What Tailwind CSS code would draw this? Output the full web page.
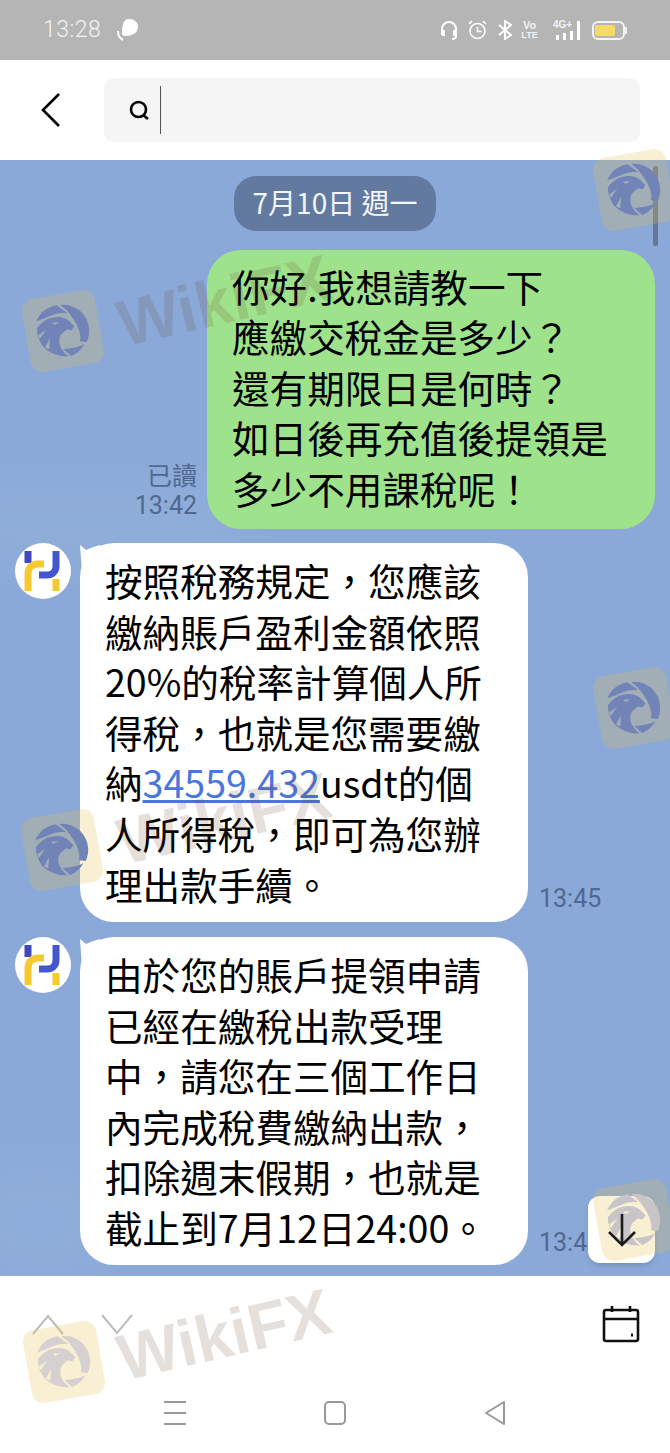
<!DOCTYPE html>
<html lang="zh-Hant">
<head>
  <meta charset="UTF-8" />
  <meta name="viewport" content="width=device-width, initial-scale=1.0" />
  <title>Chat</title>
  <script src="https://cdn.jsdelivr.net/npm/@tailwindcss/browser@4"></script>
</head>
<body class="font-['Noto_Sans_CJK_TC','Noto_Sans',sans-serif] bg-white">
  <svg class="hidden">
    <symbol id="eagle" viewBox="0 0 60 60">
      <path fill="currentColor" d="M3.5 15A28 28 0 0 1 28 1.5L38 12Q28 9 18 12Z"/>
      <path fill="currentColor" d="M32 2A28 28 0 0 1 53 46L46 44Q51 32 38 9Z"/>
      <path fill="currentColor" d="M50 48A28 28 0 0 1 34 58L27 49Q40 51 50 48Z"/>
      <path fill="currentColor" fill-rule="evenodd" d="M3 22Q12 14 20 14Q32 13 38 20L43 27L39 31L35 29Q27 32 25 37Q21 46 31 58Q14 55 6 43Q1 32 3 22ZM20 19l8 1-6 2zM3 30l10-5-9 9zM8 44l7-9-3 12z"/>
    </symbol>
    <symbol id="avatar" viewBox="0 0 56 56">
      <g fill="none" stroke-width="7">
        <path stroke="#3f48c0" d="M13 8v12"/>
        <path stroke="#f6c92f" d="M13 48V31c0-7 5-10 10-10h6"/>
        <path stroke="#4356cf" d="M41 8v15c0 6-4 9-9 9h-8"/>
        <path stroke="#f6c92f" d="M41 36v12"/>
      </g>
    </symbol>
    <symbol id="tail" viewBox="0 0 20 30">
      <path fill="#fff" d="M0 2L6 7Q12 4 20 2V30H2Z"/>
    </symbol>
  </svg>

  <div class="relative w-[670px] h-[1453px] overflow-hidden flex flex-col">
    <!-- Status bar -->
    <div class="h-[60px] bg-[#b5b5b5] flex items-center justify-between pl-[43px] pr-[43px] text-[#f2f2f2]">
      <div class="flex items-center gap-[14px]">
        <span class="font-['Roboto'] font-light text-[23px] tracking-[0.5px]">13:28</span>
        <svg class="w-[24px] h-[24px]" viewBox="0 0 24 24"><path fill="#fff" d="M14 1c5 0 9 3 9 8 0 6-6 9-13 9-2 0-3-1-3-3 0-7 1-14 7-14z"/><path fill="none" stroke="#fff" stroke-width="2" d="M3 13c0 4 1 7 5 9"/></svg>
      </div>
      <div class="flex items-center">
        <svg class="w-[18px] h-[20px]" viewBox="0 0 18 20" fill="none" stroke="#fff" stroke-width="2"><path d="M2 15V9a7 7 0 0 1 14 0v7c0 2-1 3-4 3"/><path d="M2 11h2v4H2M16 11h-2v4h2"/></svg>
        <svg class="w-[19px] h-[20px] ml-[10px]" viewBox="0 0 19 20" fill="none" stroke="#fff" stroke-width="1.6"><circle cx="9.5" cy="11" r="7.5"/><path d="M9.5 7v4.5h4M1 4l3-3M18 4l-3-3"/></svg>
        <svg class="w-[14px] h-[20px] ml-[11px]" viewBox="0 0 14 20" fill="none" stroke="#fff" stroke-width="2"><path d="M1 5l12 10-6 4V1l6 4L1 15"/></svg>
        <div class="flex flex-col items-center text-[11px] leading-[9px] font-bold font-['Liberation_Sans'] w-[15px] ml-[10px]"><span>Vo</span><span class="text-[9px] mt-[1px]">LTE</span></div>
        <div class="relative w-[27px] h-[20px] ml-[16px]">
          <span class="absolute left-0 top-0 text-[10px] leading-[10px] font-['Liberation_Sans'] font-bold">4G+</span>
          <div class="absolute left-[3px] bottom-0 flex items-end gap-[4px]">
            <div class="w-[3px] h-[5px] bg-white"></div>
            <div class="w-[3px] h-[7px] bg-white"></div>
            <div class="w-[3px] h-[9px] bg-white"></div>
            <div class="w-[3px] h-[19px] bg-white"></div>
          </div>
        </div>
        <div class="flex items-center ml-[12px]">
          <div class="w-[33px] h-[19px] rounded-[6px] border-[2.5px] border-[#f4f4f4] flex items-center pl-[1px]">
            <div class="w-[20px] h-[11px] rounded-[2px] bg-[#f7d965]"></div>
          </div>
          <div class="w-[2px] h-[7px] bg-[#eee]"></div>
        </div>
      </div>
    </div>

    <!-- Search header -->
    <div class="h-[100px] bg-white flex items-center pl-[41px] pr-[30px]">
      <svg class="w-[20px] h-[36px] mr-[43px]" viewBox="0 0 20 36" fill="none" stroke="#000" stroke-width="2.6"><path d="M18 2L2 18l16 16"/></svg>
      <div class="flex-1 h-[64px] rounded-[10px] bg-[#f5f5f5] flex items-center pl-[25px] gap-[10px]">
        <svg class="w-[21px] h-[21px]" viewBox="0 0 21 21" fill="none" stroke="#000" stroke-width="2.6"><circle cx="9.5" cy="9.5" r="7.5"/><path d="M14 15l5 4"/></svg>
        <div class="w-[1px] h-[48px] bg-[#555]"></div>
      </div>
    </div>

    <!-- Chat -->
    <div class="relative h-[1116px] bg-[#8aa9d8] flex flex-col overflow-hidden pt-[16px]">
      <div class="absolute left-[-40px] top-[320px] w-[300px] h-[90px] rounded-full bg-white/5 blur-xl"></div>
      <div class="absolute left-[-40px] top-[1000px] w-[160px] h-[120px] rounded-full bg-white/5 blur-xl"></div>

      <div class="relative self-center w-[202px] h-[55px] rounded-[22px] bg-[#627a9f] text-[#f4f6fa] text-[28px] pb-[3px] flex items-center justify-center">7月10日 週一</div>

      <div class="relative flex justify-end items-end mt-[19px] pr-[15px]">
        <div class="flex flex-col items-end mr-[10px] mb-[7px] text-[#4f6890] text-[25px] leading-[32px]">
          <span>已讀</span>
          <span class="font-['Roboto']">13:42</span>
        </div>
        <div class="w-[448px] h-[279px] rounded-[34px] bg-[#9fe28c] text-black text-[37.6px] leading-[50.4px] pl-[25px] pt-[11px]">
          你好.我想請教一下<br>應繳交稅金是多少？<br>還有期限日是何時？<br>如日後再充值後提領是<br>多少不用課稅呢！
        </div>
      </div>

      <div class="relative flex items-end mt-[14px] pl-[15px]">
        <svg class="self-start w-[56px] h-[56px] rounded-full bg-white shrink-0"><use href="#avatar" /></svg>
        <div class="relative ml-[9px] w-[448px] h-[379px] rounded-[34px] bg-white text-black text-[37.6px] leading-[50.6px] pl-[25px] pt-[12px]">
          <svg class="absolute left-0 top-0 w-[20px] h-[30px]"><use href="#tail" /></svg>
          <div class="relative">按照稅務規定，您應該<br>繳納賬戶盈利金額依照<br>20%的稅率計算個人所<br>得稅，也就是您需要繳<br>納<a class="text-[#4a76dd] underline">34559.432</a>usdt的個<br>人所得稅，即可為您辦<br>理出款手續。</div>
        </div>
        <span class="ml-[11px] mb-[7px] text-[#4f6890] text-[25px] leading-[32px] font-['Roboto']">13:45</span>
      </div>

      <div class="relative flex items-end mt-[15px] pl-[15px]">
        <svg class="self-start w-[56px] h-[56px] rounded-full bg-white shrink-0"><use href="#avatar" /></svg>
        <div class="relative ml-[9px] w-[448px] h-[328px] rounded-[34px] bg-white text-black text-[37.6px] leading-[50.6px] pl-[25px] pt-[12px]">
          <svg class="absolute left-0 top-0 w-[20px] h-[30px]"><use href="#tail" /></svg>
          <div class="relative">由於您的賬戶提領申請<br>已經在繳稅出款受理<br>中，請您在三個工作日<br>內完成稅費繳納出款，<br>扣除週末假期，也就是<br>截止到7月12日24:00。</div>
        </div>
        <span class="ml-[11px] mb-[6px] text-[#4f6890] text-[25px] leading-[32px] font-['Roboto']">13:45</span>
      </div>

      <!-- scroll thumb and jump button lie over the messages -->
      <div class="absolute right-[12px] top-[6px] w-[5px] h-[80px] rounded-full bg-[#5c6a85]/80"></div>
      <div class="absolute left-[588px] top-[1036px] w-[67px] h-[67px] rounded-[12px] bg-white shadow-md"></div>
    </div>

    <!-- Footer -->
    <div class="flex-1 bg-white relative">
      <svg class="absolute left-[31px] top-[37px] w-[34px] h-[22px]" viewBox="0 0 34 22" fill="none" stroke="#bdbdbd" stroke-width="2"><path d="M2 21L17 3l15 18"/></svg>
      <svg class="absolute left-[100px] top-[37px] w-[34px] h-[22px]" viewBox="0 0 34 22" fill="none" stroke="#bdbdbd" stroke-width="2"><path d="M2 2l15 18L32 2"/></svg>
      <svg class="absolute left-[602px] top-[29px] w-[38px] h-[38px]" viewBox="0 0 38 38" fill="none" stroke="#111" stroke-width="2.6"><rect x="2" y="5" width="34" height="31" rx="2"/><path d="M2 14h34M10 1v6M28 1v6"/><path d="M29 30h2" stroke-width="3"/></svg>
      <div class="absolute left-0 right-0 top-[124px] flex justify-center gap-[136px]">
        <svg class="w-[24px] h-[26px]" viewBox="0 0 24 26" stroke="#999" stroke-width="2"><path d="M1 2h22M1 13h22M1 24h22"/></svg>
        <svg class="w-[24px] h-[26px]" viewBox="0 0 24 26" fill="none" stroke="#999" stroke-width="2"><rect x="2" y="2" width="20" height="22" rx="4"/></svg>
        <svg class="w-[24px] h-[26px]" viewBox="0 0 24 26" fill="none" stroke="#999" stroke-width="2"><path d="M21 2L3 13l18 11z" stroke-linejoin="round"/></svg>
      </div>
    </div>

    <!-- WikiFX watermarks float over everything -->
    <div class="absolute inset-0 pointer-events-none">
      <div class="absolute left-[26px] top-[294px] w-[74px] h-[74px] rounded-[12px] bg-[#e8c050]/25 -rotate-[10deg] flex items-center justify-center text-[#7283b8]">
        <svg class="w-[56px] h-[56px]"><use href="#eagle" /></svg>
      </div>
      <span class="absolute left-[116px] top-[268px] -rotate-[13deg] font-['Liberation_Sans'] font-bold text-[65px] leading-none text-[#6b4a30]/[0.17]">WikiFX</span>

      <div class="absolute left-[25px] top-[813px] w-[74px] h-[74px] rounded-[12px] bg-[#e8c050]/25 -rotate-[10deg] flex items-center justify-center text-[#7283b8]">
        <svg class="w-[56px] h-[56px]"><use href="#eagle" /></svg>
      </div>
      <span class="absolute left-[116px] top-[786px] -rotate-[13deg] font-['Liberation_Sans'] font-bold text-[65px] leading-none text-[#6b4a30]/[0.17]">WikiFX</span>

      <div class="absolute left-[597px] top-[153px] w-[74px] h-[74px] rounded-[12px] bg-[#e8c050]/25 -rotate-[10deg] flex items-center justify-center text-[#7283b8]">
        <svg class="w-[56px] h-[56px]"><use href="#eagle" /></svg>
      </div>
      <div class="absolute left-[597px] top-[671px] w-[74px] h-[74px] rounded-[12px] bg-[#e8c050]/25 -rotate-[10deg] flex items-center justify-center text-[#7283b8]">
        <svg class="w-[56px] h-[56px]"><use href="#eagle" /></svg>
      </div>
      <div class="absolute left-[597px] top-[1183px] w-[74px] h-[74px] rounded-[12px] bg-[#e8c050]/25 -rotate-[10deg] flex items-center justify-center text-[#c8c4c8]">
        <svg class="w-[56px] h-[56px]"><use href="#eagle" /></svg>
      </div>

      <div class="absolute left-[27px] top-[1325px] w-[74px] h-[74px] rounded-[12px] bg-[#e8c050]/25 -rotate-[10deg] flex items-center justify-center text-[#d6d1d0]">
        <svg class="w-[56px] h-[56px]"><use href="#eagle" /></svg>
      </div>
      <span class="absolute left-[116px] top-[1302px] -rotate-[13deg] font-['Liberation_Sans'] font-bold text-[65px] leading-none text-[#6b4a30]/[0.17]">WikiFX</span>

      <!-- the arrow stays dark over the watermark -->
      <svg class="absolute left-[606px] top-[1212px] w-[32px] h-[36px]" viewBox="0 0 32 36" fill="none" stroke="#1c1c1c" stroke-width="2.6"><path d="M16 2v31M3 20l13 13 13-13"/></svg>
    </div>
  </div>
</body>
</html>
